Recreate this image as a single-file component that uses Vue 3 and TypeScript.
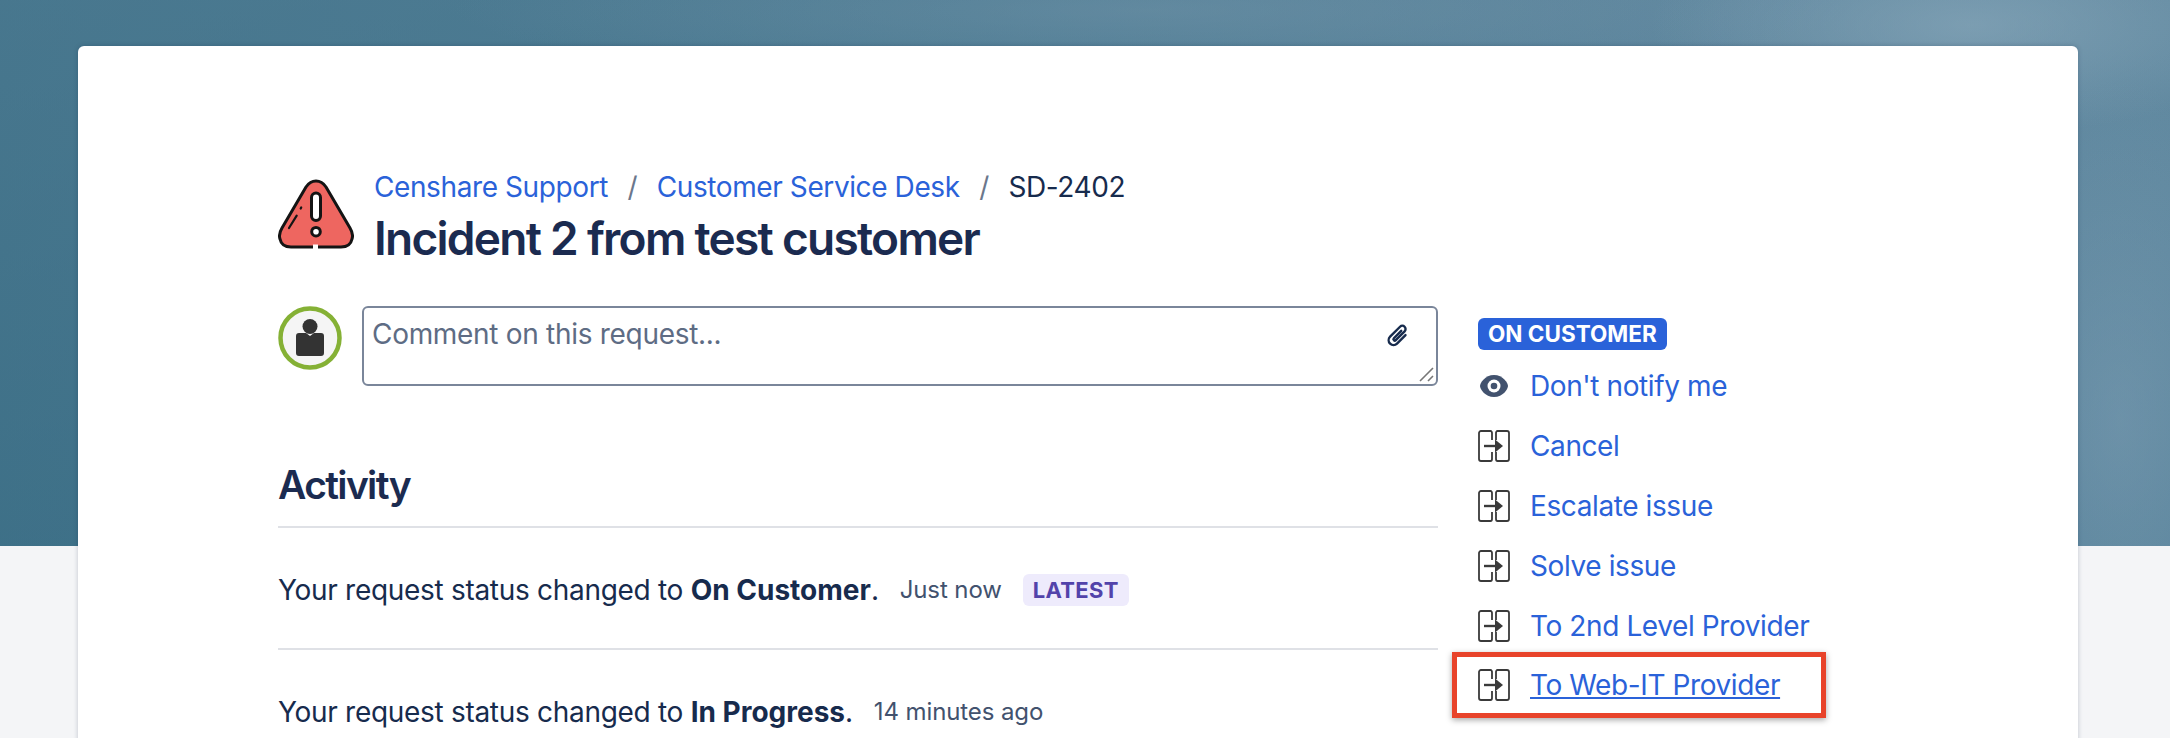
<script setup lang="ts">
const transitions: string[] = ['Cancel', 'Escalate issue', 'Solve issue', 'To 2nd Level Provider']
</script>

<template>
  <div class="page">
    <main class="card">
      <header class="head">
        <svg class="warn" width="76" height="70" viewBox="0 0 76 70">
          <path d="M38 2c5 0 8 3 10 6l24 41c3 5 3 8 2 11-1 5-5 8-11 8H13C7 68 3 65 2 60c-1-3-1-6 2-11L28 8c2-3 5-6 10-6z" fill="#ee6660" stroke="#141414" stroke-width="3" stroke-linejoin="round" />
          <rect x="33.500" y="14" width="9" height="27.500" rx="4.500" fill="#fff" stroke="#141414" stroke-width="3" />
          <circle cx="38" cy="52.700" r="4.300" fill="#fff" stroke="#141414" stroke-width="3" />
          <path d="M11 49 18.700 36.700M22.700 29.500 23.200 28.500" fill="none" stroke="#141414" stroke-width="2.200" stroke-linecap="round" />
          <rect x="35" y="65.500" width="5" height="5" fill="#fff" />
        </svg>
        <div>
          <nav class="crumbs">
            <a>Censhare Support</a>
            <span class="sep">/</span>
            <a>Customer Service Desk</a>
            <span class="sep">/</span>
            <span class="key">SD-2402</span>
          </nav>
          <h1>Incident 2 from test customer</h1>
        </div>
      </header>

      <div class="columns">
        <section class="main">
          <div class="comment">
            <svg class="avatar" width="64" height="64" viewBox="0 0 64 64">
              <circle cx="32" cy="32" r="29.500" fill="#f5f5f5" stroke="#85b135" stroke-width="4.500" />
              <circle cx="32" cy="20.500" r="7.500" fill="#333" />
              <path d="M21 27h7l4 3 4-3h7c2 0 3 1 3 3v17c0 2-1 3-3 3H21c-2 0-3-1-3-3V30c0-2 1-3 3-3z" fill="#333" />
            </svg>
            <div class="box">
              <span class="ph">Comment on this request...</span>
              <svg class="clip" width="25" height="25" viewBox="0 0 24 24" fill="none" stroke="#172b4d" stroke-width="2.300" stroke-linecap="round">
                <path transform="rotate(45 12 12)" d="M16.500 7V18.500a4.700 4.700 0 0 1-9.400 0V5a3.100 3.100 0 0 1 6.200 0V17a1.300 1.300 0 0 1-2.600 0V7" />
              </svg>
              <svg class="grip" width="16" height="16" viewBox="0 0 16 16" stroke="#777" stroke-width="1.600">
                <path d="M1 14 14 1M9 14l5-5" />
              </svg>
            </div>
          </div>

          <h2>Activity</h2>
          <div class="event">
            <span>Your request status changed to <b>On Customer</b>.</span>
            <span class="time">Just now</span>
            <span class="latest">LATEST</span>
          </div>
          <div class="event">
            <span>Your request status changed to <b>In Progress</b>.</span>
            <span class="time">14 minutes ago</span>
          </div>
        </section>

        <aside class="side">
          <span class="status">ON CUSTOMER</span>
          <div class="action">
            <span class="ico-slot">
              <svg width="28" height="22" viewBox="0 0 28 22">
                <path d="M14 0C23 0 28 8 28 11s-5 11-14 11S0 14 0 11 5 0 14 0z" fill="#42526e" />
                <circle cx="14" cy="11" r="6.500" fill="#fff" />
                <circle cx="14" cy="11" r="3.300" fill="#42526e" />
              </svg>
            </span>
            <a>Don't notify me</a>
          </div>
          <div v-for="t in transitions" :key="t" class="action">
            <span class="ico-slot">
              <svg width="32" height="32" viewBox="0 0 32 32" fill="none" stroke="#3a3a3a" stroke-width="1.800">
                <path d="M12.500 1H3C2 1 1 2 1 3v26c0 1 1 2 2 2h9.500c1 0 1.500-1 1.500-2v-7M14 10V3c0-1-.5-2-1.500-2M19.500 1H29c1 0 2 1 2 2v26c0 1-1 2-2 2h-9.500c-1 0-1.500-1-1.500-2v-7M18 10V3c0-1 .5-2 1.500-2" />
                <path d="M6 16h12" stroke-width="2.400" />
                <path d="M17 9.500 25 16l-8 6.500z" fill="#3a3a3a" stroke="none" />
              </svg>
            </span>
            <a>{{ t }}</a>
          </div>
          <div class="highlight">
            <div class="action inner">
              <span class="ico-slot">
                <svg width="32" height="32" viewBox="0 0 32 32" fill="none" stroke="#3a3a3a" stroke-width="1.800">
                  <path d="M12.500 1H3C2 1 1 2 1 3v26c0 1 1 2 2 2h9.500c1 0 1.500-1 1.500-2v-7M14 10V3c0-1-.5-2-1.500-2M19.500 1H29c1 0 2 1 2 2v26c0 1-1 2-2 2h-9.500c-1 0-1.500-1-1.500-2v-7M18 10V3c0-1 .5-2 1.500-2" />
                  <path d="M6 16h12" stroke-width="2.400" />
                  <path d="M17 9.500 25 16l-8 6.500z" fill="#3a3a3a" stroke="none" />
                </svg>
              </span>
              <a class="under">To Web-IT Provider</a>
            </div>
          </div>
        </aside>
      </div>
    </main>
  </div>
</template>

<style>
html, body { margin: 0; background: #f4f5f7; }
</style>

<style scoped>
.page {
  height: 738px;
  overflow: hidden;
  box-sizing: border-box;
  padding-top: 46px;
  font-family: Inter, "Liberation Sans", sans-serif;
  letter-spacing: -0.3px;
  color: #172b4d;
  background-color: #f4f5f7;
  background-image:
    radial-gradient(ellipse 320px 110px at 1970px 25px, rgba(150, 178, 195, .5), transparent),
    radial-gradient(ellipse 160px 340px at 2120px 420px, rgba(135, 165, 187, .4), transparent),
    radial-gradient(ellipse 700px 70px at 1150px 10px, rgba(120, 152, 172, .4), transparent),
    linear-gradient(180deg, rgba(82, 125, 148, .45) 0%, rgba(60, 110, 134, .45) 100%),
    linear-gradient(90deg, #3f7289 0%, #4d7d95 45%, #6b90a8 80%, #7095ac 100%);
  background-size: 100% 546px;
  background-repeat: no-repeat;
}
.card {
  width: 2000px;
  height: 800px;
  margin-left: 78px;
  box-sizing: border-box;
  padding: 127px 0 0 200px;
  background: #fff;
  border-radius: 6px;
  box-shadow: 0 0 5px rgba(9, 30, 66, .22);
}
.head { display: flex; align-items: flex-start; gap: 20px; }
.warn { display: block; flex: none; margin-top: 6px; }
.crumbs { display: flex; align-items: center; gap: 19.500px; font-size: 28px; line-height: 34px; margin-top: -3px; letter-spacing: -0.4px; }
.crumbs a { color: #2a62d9; }
.sep { color: #6b778c; }
.key { color: #172b4d; }
h1 { margin: 6px 0 0; font-size: 46px; line-height: 56px; font-weight: 600; letter-spacing: -1.720px; color: #1b2b50; }
.columns { display: flex; gap: 40px; margin-top: 40px; }
.main { width: 1160px; }
.comment { display: flex; gap: 20px; }
.avatar { display: block; flex: none; }
.box {
  flex: 1; position: relative; height: 80px; box-sizing: border-box;
  border: 2px solid #7a869a; border-radius: 6px; padding: 9px 8px;
  font-size: 28px; line-height: 34px;
}
.ph { color: #5e6c84; }
.clip { position: absolute; right: 25px; top: 15px; }
.grip { position: absolute; right: 1px; bottom: 1px; }
h2 { margin: 74px 0 0; height: 68px; font-size: 39px; line-height: 50px; font-weight: 600; color: #1b2b50; letter-spacing: -1.650px; border-bottom: 2px solid #dfe1e6; box-sizing: border-box; }
.event { display: flex; align-items: center; height: 122px; padding-top: 3px; font-size: 28px; gap: 21px; border-bottom: 2px solid #dfe1e6; box-sizing: border-box; }
.event b { font-weight: 700; letter-spacing: 0; }
.time { font-size: 24px; color: #42526e; letter-spacing: -0.1px; }
.latest { background: #eeebfc; color: #5243aa; font-size: 22px; line-height: 32px; font-weight: 700; padding: 0 10px; border-radius: 6px; letter-spacing: .3px; }
.side { width: 340px; padding-top: 12px; }
.status { display: block; width: fit-content; background: #2a62d9; color: #fff; font-size: 22.500px; line-height: 32px; font-weight: 700; padding: 0 10px; border-radius: 6px; letter-spacing: 0; margin-bottom: 6px; }
.action { display: flex; align-items: center; gap: 20px; height: 60px; font-size: 28px; color: #2a62d9; white-space: nowrap; letter-spacing: -0.4px; }
.action a { color: #2a62d9; }
.ico-slot { flex: none; width: 32px; display: flex; justify-content: center; }
.ico-slot svg { display: block; }
.highlight {
  width: 374px; height: 66px; margin: -4px 0 0 -26px; box-sizing: border-box;
  border: 5px solid #e8432a; box-shadow: 0 2px 6px rgba(0, 0, 0, .35);
  padding-left: 21px; display: flex; align-items: center;
}
.inner { height: auto; }
.under { text-decoration: underline; }
</style>
